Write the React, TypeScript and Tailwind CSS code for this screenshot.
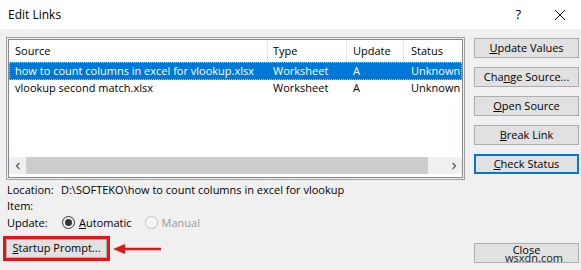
import React from "react";

const F = { fontFamily: '"Open Sans", "Noto Sans", Arial, sans-serif' };

function Btn({ children, focused = false, className = "" }: { children: React.ReactNode; focused?: boolean; className?: string }) {
  return (
    <div
      className={
        "h-[20px] w-[105px] flex items-center justify-center bg-[#e1e1e1] text-[11px] text-black " +
        (focused ? "border-2 border-[#0078d7] " : "border border-[#adadad] ") +
        className
      }
    >
      {children}
    </div>
  );
}

export default function App() {
  return (
    <div className="w-[581px] h-[270px] bg-[#f0f0f0] relative overflow-hidden text-black" style={F}>
      {/* title bar */}
      <div className="h-[29px] bg-white flex items-center pl-[8px] pr-[12px]">
        <span className="text-[12px] flex-1">Edit Links</span>
        <span className="text-[13px] mr-[33px]">?</span>
        <svg width="12" height="12" viewBox="0 0 12 12" className="mr-[3px]">
          <path d="M1 1 L11 11 M11 1 L1 11" stroke="#111" strokeWidth="1" />
        </svg>
      </div>

      <div className="flex pl-[6px] pr-[2px]">
        {/* left column */}
        <div className="w-[459px] flex flex-col">
          {/* list box */}
          <div className="mt-[8px] h-[143px] border border-[#a0a0a0] p-[1px] bg-[#f0f0f0]">
            <div className="h-full border border-[#828790] bg-white flex flex-col text-[11px]">
              <div className="h-[22px] flex items-center">
                <div className="w-[259px] h-full flex items-center pl-[6px] border-r border-[#e5e5e5]">Source</div>
                <div className="w-[79px] h-full flex items-center pl-[5px] border-r border-[#e5e5e5]">Type</div>
                <div className="w-[57px] h-full flex items-center pl-[6px] border-r border-[#e5e5e5]">Update</div>
                <div className="flex-1 h-full flex items-center pl-[7px] overflow-hidden">Status</div>
              </div>
              <div className="h-[18px] flex items-center bg-[#0078d7] text-white outline outline-1 outline-dotted outline-offset-[-1px] outline-[#9cc8ee]">
                <div className="w-[259px] pl-[6px] whitespace-nowrap">how to count columns in excel for vlookup.xlsx</div>
                <div className="w-[79px] pl-[5px]">Worksheet</div>
                <div className="w-[57px] pl-[6px]">A</div>
                <div className="flex-1 pl-[7px] whitespace-nowrap overflow-hidden">Unknown</div>
              </div>
              <div className="h-[17px] flex items-center">
                <div className="w-[259px] pl-[6px] whitespace-nowrap">vlookup second match.xlsx</div>
                <div className="w-[79px] pl-[5px]">Worksheet</div>
                <div className="w-[57px] pl-[6px]">A</div>
                <div className="flex-1 pl-[7px] whitespace-nowrap overflow-hidden">Unknown</div>
              </div>
              <div className="flex-1" />
              {/* horizontal scrollbar */}
              <div className="h-[17px] flex items-center bg-[#f0f0f0] mb-[3px]">
                <div className="w-[17px] flex items-center justify-center">
                  <svg width="8" height="8" viewBox="0 0 8 8"><path d="M5.5 1 L2.5 4 L5.5 7" stroke="#606060" strokeWidth="1.4" fill="none" /></svg>
                </div>
                <div className="flex-1 h-full bg-[#cdcdcd] mr-[17px]" />
                <div className="w-[17px] flex items-center justify-center">
                  <svg width="8" height="8" viewBox="0 0 8 8"><path d="M2.5 1 L5.5 4 L2.5 7" stroke="#606060" strokeWidth="1.4" fill="none" /></svg>
                </div>
              </div>
            </div>
          </div>

          {/* info */}
          <div className="text-[11px] leading-[16px] mt-[2px]">
            <div className="flex">
              <span className="w-[55px] pl-[1px]">Location:</span>
              <span>D:\SOFTEKO\how to count columns in excel for vlookup</span>
            </div>
            <div className="pl-[1px]">Item:</div>
            <div className="flex items-center h-[17px]">
              <span className="w-[56px] pl-[1px]">Update:</span>
              <span className="w-[13px] h-[13px] rounded-full border border-[#333] flex items-center justify-center mr-[4px]">
                <span className="w-[7px] h-[7px] rounded-full bg-[#333]" />
              </span>
              <span className="mr-[13px]"><u>A</u>utomatic</span>
              <span className="w-[13px] h-[13px] rounded-full border border-[#c0c0c0] bg-[#f7f7f7] mr-[4px]" />
              <span className="text-[#9a9a9a]">Manual</span>
            </div>
          </div>

          {/* startup prompt */}
          <div className="mt-[5px] ml-[-3px] w-[107px] h-[25px] border-[3px] border-[#e0161b] flex">
            <div className="flex-1 bg-[#e1e1e1] border border-[#adadad] flex items-center justify-center text-[11px]">
              <span><u>S</u>tartup Prompt...</span>
            </div>
          </div>
        </div>

        {/* right column */}
        <div className="ml-[9px] flex flex-col">
          <div className="mt-[9px] flex flex-col gap-[9px]">
            <Btn><span><u>U</u>pdate Values</span></Btn>
            <Btn><span>Cha<u>n</u>ge Source...</span></Btn>
            <Btn><span><u>O</u>pen Source</span></Btn>
            <Btn><span><u>B</u>reak Link</span></Btn>
            <Btn focused><span><u>C</u>heck Status</span></Btn>
          </div>
          <div className="mt-[69px] relative">
            <Btn><span className="mt-[-5px]">Close</span></Btn>
            <span className="absolute left-[31px] top-[9px] text-[11px] text-[#222] leading-none">wsxdn.com</span>
          </div>
        </div>
      </div>

      {/* red arrow annotation */}
      <svg className="absolute left-[111px] top-[243px]" width="52" height="12" viewBox="0 0 52 12">
        <path d="M50 6 L12 6" stroke="#e0161b" strokeWidth="2.5" />
        <path d="M2 6 L14 1 L14 11 Z" fill="#e0161b" />
      </svg>
    </div>
  );
}
